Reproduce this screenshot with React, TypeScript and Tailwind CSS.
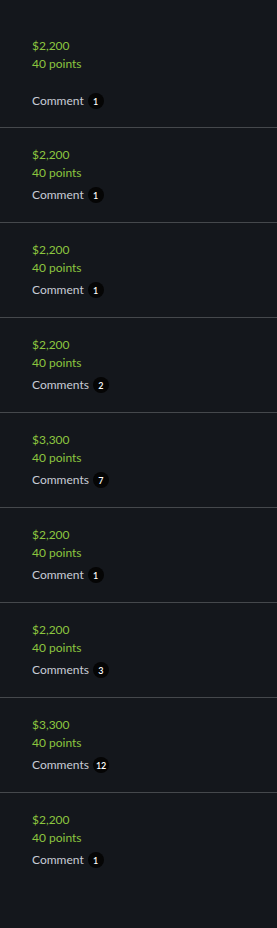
import React from "react";

const items = [
  { price: "$2,200", label: "Comment", count: 1 },
  { price: "$2,200", label: "Comment", count: 1 },
  { price: "$2,200", label: "Comment", count: 1 },
  { price: "$2,200", label: "Comments", count: 2 },
  { price: "$3,300", label: "Comments", count: 7 },
  { price: "$2,200", label: "Comment", count: 1 },
  { price: "$2,200", label: "Comments", count: 3 },
  { price: "$3,300", label: "Comments", count: 12 },
  { price: "$2,200", label: "Comment", count: 1 },
];

export default function App() {
  return (
    <div
      className="min-h-screen w-full bg-[#14171c] text-[12px] leading-[18px]"
      style={{ fontFamily: 'Lato, "Open Sans", sans-serif' }}
    >
      {items.map((it, i) => (
        <div
          key={i}
          className={
            i === 0
              ? "pl-8 pt-[37px] pb-[17px]"
              : "pl-8 pt-[18px] pb-[18px] border-t border-[#45484c]"
          }
        >
          <div className="text-[#8cc63f]">{it.price}</div>
          <div className="text-[#8cc63f]">40 points</div>
          <div
            className={
              "flex items-center h-[18px] " + (i === 0 ? "mt-[19px]" : "mt-[4px]")
            }
          >
            <span className="text-[#c8cdd6]">{it.label}</span>
            <span className="ml-[4px] flex h-[16px] min-w-[16px] px-[3px] items-center justify-center rounded-full bg-[#050505] text-[9px] font-semibold leading-none text-white">
              {it.count}
            </span>
          </div>
        </div>
      ))}
    </div>
  );
}
